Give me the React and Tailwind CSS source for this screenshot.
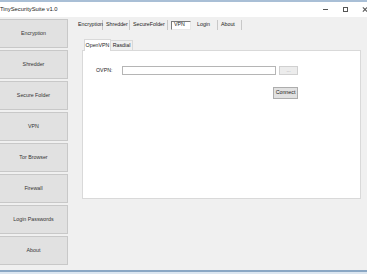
const SIDE = [
  "Encryption",
  "Shredder",
  "Secure Folder",
  "VPN",
  "Tor Browser",
  "Firewall",
  "Login Passwords",
  "About",
];

const TABS = [
  { label: "Encryption", w: "w-[28px]" },
  { label: "Shredder", w: "w-[27px]" },
  { label: "SecureFolder", w: "w-[38px]" },
  { label: "VPN", w: "w-[26px]", active: true },
  { label: "Login", w: "w-[24px]" },
  { label: "About", w: "w-[24px]" },
];

export default function App() {
  return (
    <div
      className="w-[367px] h-[274px] overflow-hidden bg-[#dce6f0] text-[#222] flex flex-col"
      style={{ fontFamily: '"Liberation Sans", Arial, sans-serif' }}
    >
      <div className="h-[2px] bg-[#a9bfd6]" />
      {/* title bar */}
      <div className="h-[15px] bg-white flex items-center">
        <span className="w-[315px] text-[5.8px] leading-none">TinySecuritySuite v1.0</span>
        <span className="w-[20px] flex justify-center">
          <span className="block w-[5px] h-px bg-[#555]" />
        </span>
        <span className="w-[20px] flex justify-center">
          <span className="block w-[5px] h-[5px] border border-[#555]" />
        </span>
        <span className="w-[12px] h-[7px] overflow-hidden relative">
          <span className="absolute left-[7px] top-[3px] block w-[6px] h-px bg-[#555] rotate-45" />
          <span className="absolute left-[7px] top-[3px] block w-[6px] h-px bg-[#555] -rotate-45" />
        </span>
      </div>

      {/* body */}
      <div className="h-[253px] bg-[#f0f0f0] flex pt-[2px]">
        <div className="w-[68px] flex flex-col gap-[2px]">
          {SIDE.map((s) => (
            <div
              key={s}
              className="h-[29px] flex items-center justify-center text-[5.3px] text-[#333] border border-[#c8c8c8] border-l-0 bg-[#e1e1e1]"
            >
              {s}
            </div>
          ))}
        </div>

        <div className="flex-1 pl-[7px] pr-[6px] flex flex-col">
          {/* button-style tab strip */}
          <div className="h-[10px] mt-[1px] flex items-center">
            {TABS.map((t) => (
              <div
                key={t.label}
                className={"h-[10px] flex items-center " + (t.active ? "" : "border-r border-[#c8c8c8] ") + t.w}
              >
                {t.active ? (
                  <span className="ml-[3px] pl-[2px] h-[9px] w-[20px] flex items-center text-[5.3px] bg-white border border-[#7a7a7a] border-r-[#e8e8e8] border-b-[#e8e8e8]">
                    {t.label}
                  </span>
                ) : (
                  <span className="text-[5.3px] leading-none pl-[3px]">{t.label}</span>
                )}
              </div>
            ))}
          </div>

          {/* inner tab control */}
          <div className="mt-[8px] ml-[7px] flex flex-col">
            <div className="flex items-end h-[12px] pl-[2px]">
              <div className="h-[12px] w-[27px] bg-white border border-[#d9d9d9] border-b-0 flex items-center justify-center text-[5.3px] relative z-10 -mb-px">
                OpenVPN
              </div>
              <div className="h-[10px] w-[22px] bg-[#f0f0f0] border border-[#d9d9d9] border-l-0 border-b-0 flex items-center justify-center text-[5.3px]">
                Rasdial
              </div>
            </div>
            <div className="h-[149px] bg-white border border-[#d9d9d9]">
              <div className="mt-[15px] flex items-center h-[9px]">
                <span className="w-[39px] pl-[13px] text-[5.3px]">OVPN:</span>
                <div className="w-[154px] h-[9px] border border-[#b5b5b5] bg-white" />
                <div className="ml-[3px] w-[19px] h-[9px] border border-[#d0d0d0] bg-[#ececec] flex items-center justify-center text-[5px] text-[#a0a0a0] leading-none">
                  ...
                </div>
              </div>
              <div className="mt-[12px] flex">
                <div className="ml-[190px] w-[25px] h-[12px] border border-[#adadad] bg-[#e1e1e1] flex items-center justify-center text-[5.3px]">
                  Connect
                </div>
              </div>
            </div>
          </div>
        </div>
      </div>
      <div className="h-[2px] bg-[#8aa7c4]" />
    </div>
  );
}
